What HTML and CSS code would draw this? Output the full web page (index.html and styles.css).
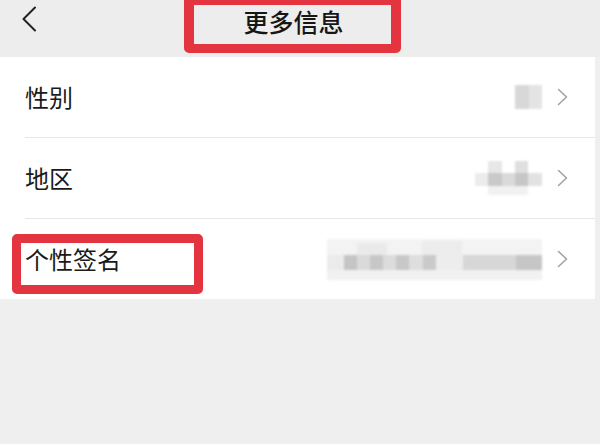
FILE: index.html
```html
<!DOCTYPE html>
<html lang="zh-CN">
<head>
<meta charset="utf-8">
<title>更多信息</title>
<link rel="stylesheet" href="styles.css">
</head>
<body>
<div class="page">
  <header class="nav">
    <span class="back">
      <svg width="16" height="26" viewBox="0 0 16 26"><path d="M14 1.5 L2.5 13 L14 24.5" fill="none" stroke="#222" stroke-width="2" stroke-linecap="round" stroke-linejoin="round"/></svg>
    </span>
    <h1 class="title">更多信息</h1>
  </header>

  <ul class="list">
    <li class="row">
      <div class="row-inner">
        <span class="label">性别</span>
        <span class="value">
          <svg class="blur" width="27" height="24" viewBox="0 0 27 24">
            <rect x="0" y="0" width="14" height="24" fill="#d8d8d8"/>
            <rect x="14" y="0" width="13" height="24" fill="#e4e4e4"/>
          </svg>
          <svg class="chev" width="11" height="18" viewBox="0 0 11 18"><path d="M1.5 1.5 L9.5 9 L1.5 16.5" fill="none" stroke="#a3a3a3" stroke-width="1.6" stroke-linecap="round" stroke-linejoin="round"/></svg>
        </span>
      </div>
    </li>
    <li class="row">
      <div class="row-inner">
        <span class="label">地区</span>
        <span class="value">
          <svg class="blur" width="67" height="34" viewBox="0 0 67 34">
            <rect x="13" y="0" width="14" height="12" fill="#e7e7e7"/>
            <rect x="40" y="0" width="13" height="12" fill="#dfdfdf"/>
            <rect x="0" y="12" width="13" height="13" fill="#ececec"/>
            <rect x="13" y="12" width="14" height="13" fill="#c9c9c9"/>
            <rect x="27" y="12" width="13" height="13" fill="#dadada"/>
            <rect x="40" y="12" width="13" height="13" fill="#c6c6c6"/>
            <rect x="53" y="12" width="14" height="13" fill="#e2e2e2"/>
            <rect x="13" y="25" width="40" height="9" fill="#f1f1f1"/>
          </svg>
          <svg class="chev" width="11" height="18" viewBox="0 0 11 18"><path d="M1.5 1.5 L9.5 9 L1.5 16.5" fill="none" stroke="#a3a3a3" stroke-width="1.6" stroke-linecap="round" stroke-linejoin="round"/></svg>
        </span>
      </div>
    </li>
    <li class="row">
      <div class="row-inner">
        <span class="label">个性签名</span>
        <span class="value">
          <svg class="blur" width="215" height="41" viewBox="0 0 215 41">
            <rect x="0" y="0" width="215" height="16" fill="#f3f3f3"/>
            <rect x="30" y="4" width="30" height="12" fill="#eaeaea"/>
            <rect x="95" y="2" width="40" height="14" fill="#ececec"/>
            <rect x="0" y="16" width="17" height="15" fill="#ebebeb"/>
            <rect x="17" y="16" width="13" height="15" fill="#c5c5c5"/>
            <rect x="30" y="16" width="13" height="15" fill="#dadada"/>
            <rect x="43" y="16" width="13" height="15" fill="#c7c7c7"/>
            <rect x="56" y="16" width="13" height="15" fill="#dcdcdc"/>
            <rect x="69" y="16" width="13" height="15" fill="#c8c8c8"/>
            <rect x="82" y="16" width="14" height="15" fill="#dedede"/>
            <rect x="96" y="16" width="13" height="15" fill="#cacaca"/>
            <rect x="109" y="16" width="27" height="15" fill="#ededed"/>
            <rect x="136" y="16" width="53" height="15" fill="#d7d7d7"/>
            <rect x="189" y="16" width="26" height="15" fill="#c6c6c6"/>
            <rect x="0" y="31" width="215" height="10" fill="#f1f1f1"/>
          </svg>
          <svg class="chev" width="11" height="18" viewBox="0 0 11 18"><path d="M1.5 1.5 L9.5 9 L1.5 16.5" fill="none" stroke="#a3a3a3" stroke-width="1.6" stroke-linecap="round" stroke-linejoin="round"/></svg>
        </span>
      </div>
    </li>
  </ul>

  <div class="mark mark-title"></div>
  <div class="mark mark-sign"></div>
</div>
</body>
</html>
```

FILE: styles.css
```css
* {
  box-sizing: border-box;
}

html, body {
  margin: 0;
  padding: 0;
}

body {
  background: #efefef;
  font-family: "Noto Sans CJK SC", "Noto Sans", sans-serif;
  color: #1a1a1a;
}

.page {
  position: relative;
  width: 600px;
  height: 444px;
  overflow: hidden;
  background: #efefef;
}

.nav {
  position: relative;
  height: 57px;
  background: #ededed;
  display: flex;
  justify-content: center;
  align-items: flex-start;
}

.back {
  position: absolute;
  left: 21px;
  top: 6px;
  display: flex;
}

.title {
  margin: 0 13px 0 0;
  padding-top: 4px;
  font-size: 25px;
  line-height: 34px;
  font-weight: 500;
  color: #161616;
  letter-spacing: 0;
}

.list {
  list-style: none;
  margin: 0 5px 0 0;
  padding: 0;
  background: #ffffff;
}

.row {
  padding-left: 25px;
}

.row-inner {
  height: 81px;
  display: flex;
  align-items: center;
  justify-content: space-between;
  border-bottom: 1px solid #e6e6e6;
  padding-right: 27px;
}

.row:last-child .row-inner {
  border-bottom: none;
  height: 80px;
}

.label {
  font-size: 24px;
  line-height: 30px;
  color: #1a1a1a;
}

.value {
  display: flex;
  align-items: center;
  gap: 15px;
}

.blur {
  display: block;
  filter: blur(0.8px);
}

.chev {
  display: block;
}

.mark {
  position: absolute;
  border-style: solid;
  border-color: #e3343f;
  border-radius: 5px;
}

.mark-title {
  left: 184px;
  top: -5px;
  width: 217px;
  height: 58px;
  border-width: 10px 10px 9px 10px;
}

.mark-sign {
  left: 12px;
  top: 234px;
  width: 191px;
  height: 60px;
  border-width: 9px;
}
```
